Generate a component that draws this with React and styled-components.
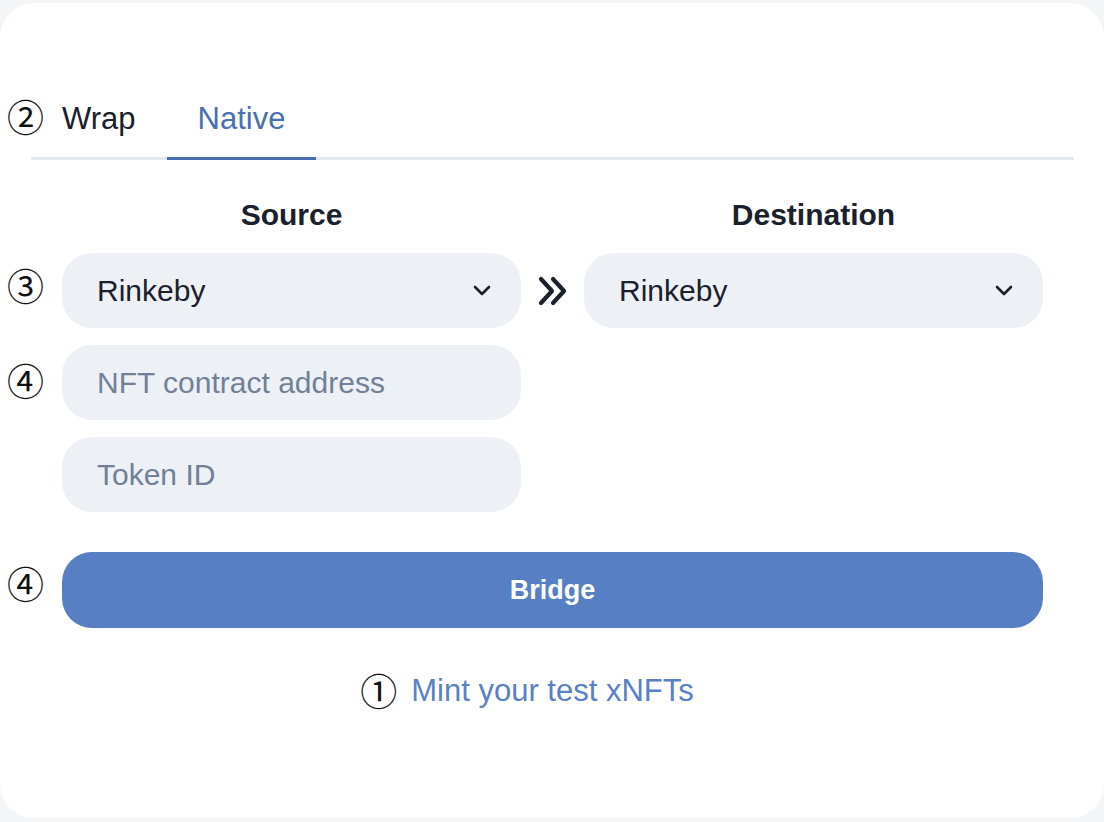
import React, { useState } from "react";
import styled, { createGlobalStyle } from "styled-components";

const GlobalStyle = createGlobalStyle`
  html, body {
    margin: 0;
    padding: 0;
    background: #f4f5f7;
  }
  body {
    font-family: "Liberation Sans", Arial, sans-serif;
    color: #1a202c;
  }
`;

const Card = styled.div`
  margin-top: 3px;
  height: 815px;
  box-sizing: border-box;
  background: #ffffff;
  border-radius: 34px;
  padding-top: 98px;
`;

const TabList = styled.div`
  position: relative;
  display: flex;
  margin: 0 30px 0 31px;
  border-bottom: 3px solid #e2e8f0;
`;

const Tab = styled.button`
  background: none;
  border: none;
  font-family: inherit;
  font-size: 31px;
  line-height: 36px;
  padding: 0 31px 20px;
  margin-bottom: -3px;
  color: ${(p) => (p.$active ? "#4a6fb0" : "#1a202c")};
  border-bottom: 3px solid ${(p) => (p.$active ? "#4a6db0" : "transparent")};
  cursor: pointer;
`;

const Mark = styled.span`
  position: absolute;
  left: ${(p) => p.$left}px;
  top: ${(p) => p.$top}px;
  font-family: "Noto Sans CJK JP", sans-serif;
  font-size: 37px;
  line-height: 36px;
  color: #111;
`;

const Panel = styled.div`
  padding: 37px 61px 0 62px;
  display: flex;
  flex-direction: column;
`;

const Pair = styled.div`
  position: relative;
  display: grid;
  grid-template-columns: 459px 1fr 459px;
  align-items: center;
`;

const Heading = styled.div`
  text-align: center;
  font-weight: 700;
  font-size: 30px;
  line-height: 36px;
`;

const SelectBox = styled.div`
  height: 75px;
  box-sizing: border-box;
  background: #edf1f6;
  border-radius: 30px;
  padding: 0 30px 0 35px;
  display: flex;
  align-items: center;
  justify-content: space-between;
  font-size: 30px;
  color: #1a202c;
`;

const Arrows = styled.div`
  display: flex;
  justify-content: center;
  align-items: center;
`;

const FieldRow = styled.div`
  position: relative;
  width: 459px;
`;

const Field = styled.input`
  width: 100%;
  height: 75px;
  box-sizing: border-box;
  background: #edf1f6;
  border: none;
  border-radius: 30px;
  padding: 0 35px;
  font-family: inherit;
  font-size: 30px;
  color: #1a202c;
  outline: none;
  &::placeholder {
    color: #718096;
  }
`;

const BridgeButton = styled.button`
  width: 100%;
  height: 76px;
  border: none;
  border-radius: 30px;
  background: #5780c4;
  color: #ffffff;
  font-family: inherit;
  font-weight: 700;
  font-size: 27px;
  cursor: pointer;
`;

const LinkRow = styled.div`
  display: flex;
  justify-content: center;
`;

const LinkWrap = styled.span`
  position: relative;
`;

const MintLink = styled.a`
  font-size: 31px;
  line-height: 36px;
  color: #5a80c6;
  text-decoration: none;
`;

function Chevron() {
  return (
    <svg width="18" height="12" viewBox="0 0 18 12">
      <path d="M2 2 L9 9 L16 2" fill="none" stroke="#1a202c" strokeWidth="2.6" strokeLinecap="round" strokeLinejoin="round" />
    </svg>
  );
}

function DoubleChevron() {
  return (
    <svg width="32" height="32" viewBox="0 0 32 32">
      <path d="M4 4 L15 16 L4 28 M16 4 L27 16 L16 28" fill="none" stroke="#1a202c" strokeWidth="4.2" strokeLinecap="round" strokeLinejoin="round" />
    </svg>
  );
}

export default function App() {
  const [tab, setTab] = useState("native");

  return (
    <>
      <GlobalStyle />
      <Card>
        <TabList>
          <Mark $left={-24} $top={-3}>②</Mark>
          <Tab $active={tab === "wrap"} onClick={() => setTab("wrap")}>Wrap</Tab>
          <Tab $active={tab === "native"} onClick={() => setTab("native")}>Native</Tab>
        </TabList>
        <Panel>
          <Pair>
            <Heading>Source</Heading>
            <div />
            <Heading>Destination</Heading>
          </Pair>
          <Pair style={{ marginTop: 20 }}>
            <Mark $left={-55} $top={14}>③</Mark>
            <SelectBox>
              Rinkeby
              <Chevron />
            </SelectBox>
            <Arrows>
              <DoubleChevron />
            </Arrows>
            <SelectBox>
              Rinkeby
              <Chevron />
            </SelectBox>
          </Pair>
          <FieldRow style={{ marginTop: 17 }}>
            <Mark $left={-55} $top={17}>④</Mark>
            <Field placeholder="NFT contract address" />
          </FieldRow>
          <FieldRow style={{ marginTop: 17 }}>
            <Field placeholder="Token ID" />
          </FieldRow>
          <FieldRow style={{ marginTop: 40, width: "100%" }}>
            <Mark $left={-55} $top={13}>④</Mark>
            <BridgeButton>Bridge</BridgeButton>
          </FieldRow>
          <LinkRow style={{ marginTop: 45 }}>
            <LinkWrap>
              <Mark $left={-51} $top={-1}>①</Mark>
              <MintLink href="#">Mint your test xNFTs</MintLink>
            </LinkWrap>
          </LinkRow>
        </Panel>
      </Card>
    </>
  );
}
